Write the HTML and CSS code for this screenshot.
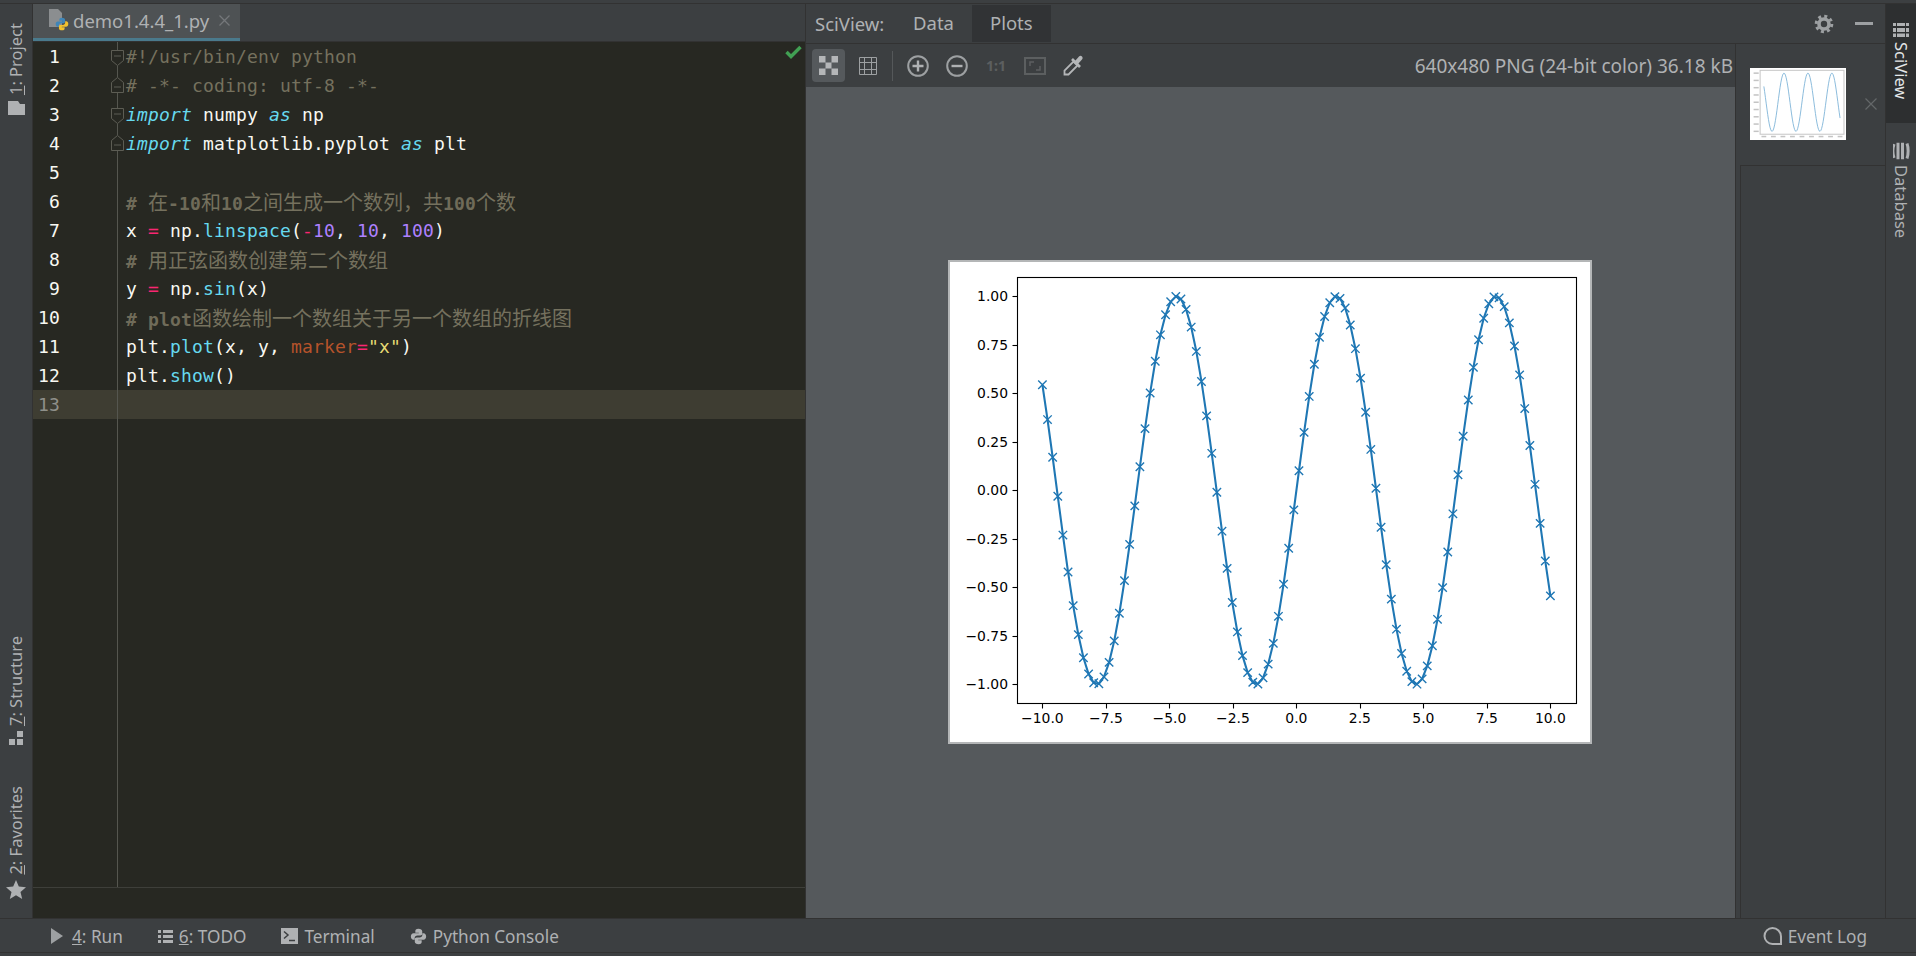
FILE: index.html
```html
<!DOCTYPE html>
<html lang="en">
<head>
<meta charset="utf-8">
<title>SciView</title>
<link rel="stylesheet" href="styles.css">
</head>
<body>
<svg class="defs" width="0" height="0" aria-hidden="true">
  <symbol id="fold-down" viewBox="0 0 14 16"><path d="M.5.5h12v10l-6 5-6-5z" fill="none" stroke="#5d5d54"/><path d="M3 6h7" stroke="#5d5d54"/></symbol>
  <symbol id="fold-up" viewBox="0 0 14 16"><path d="M.5 15.5h12v-10l-6-5-6 5z" fill="none" stroke="#5d5d54"/><path d="M3 10h7" stroke="#5d5d54"/></symbol>
  <symbol id="py" viewBox="0 0 16 16"><path id="py-half" d="M8 .8C5.6.8 5 1.8 5 3v1.4h3.3V5H3.3C1.8 5 .8 6.2.8 8s1 3.1 2.4 3.1h1.2V9.4C4.4 8 5.5 7 7 7h2.8c1 0 1.7-.7 1.7-1.6V3C11.500 1.700 10 .8 8 .8z"/></symbol>
</svg>
<div class="main">
  <aside class="stripe-left">
    <div class="vtab vtab-project"><span class="vtext-up"><u>1</u>: Project</span>
      <svg class="ico-folder" width="17" height="14" viewBox="0 0 17 14"><path d="M0 0h10l2 3h5v11H0z" fill="#afb1b3"/></svg>
    </div>
    <div class="vtab vtab-push"><span class="vtext-up"><u>7</u>: Structure</span>
      <svg width="14" height="14" viewBox="0 0 14 14"><path d="M8 0h6v6H8zM0 8h6v6H0zM8 8h6v6H8z" fill="#afb1b3"/></svg>
    </div>
    <div class="vtab vtab-fav"><span class="vtext-up"><u>2</u>: Favorites</span>
      <svg width="20" height="19" viewBox="0 0 20 19"><path d="M10 0l2.800 6.600 7.200.6-5.500 4.700 1.700 7L10 15.200 3.800 19l1.700-7L0 7.200l7.200-.6z" fill="#afb1b3"/></svg>
    </div>
  </aside>

  <section class="editor-pane">
    <div class="tabbar">
      <div class="filetab">
        <svg class="ico-pyfile" width="21" height="22" viewBox="0 0 21 22">
          <path d="M0 0h9l4 4v14H0z" fill="#8b8e90"/>
          <g transform="translate(5 8)"><use href="#py" width="16" height="14" fill="#3f86b8"/></g>
          <g transform="translate(21 22) rotate(180)"><use href="#py" width="16" height="14" fill="#f2c12e"/></g>
        </svg>
        <span class="filetab-name">demo1.4.4_1.py</span>
        <svg width="11" height="11" viewBox="0 0 11 11"><path d="M.5.5l10 10M10.500.5l-10 10" stroke="#74777a" stroke-width="1.300"/></svg>
      </div>
    </div>
    <div class="editor">
      <div class="code-area">
        <svg class="ok-mark" width="17" height="14" viewBox="0 0 17 14"><path d="M1.500 7l4.500 4.500L15.500 2" fill="none" stroke="#41a053" stroke-width="3.400"/></svg>
        <div class="row"><span class="ln">1</span><span class="foldcell fold-a"><svg width="14" height="16"><use href="#fold-down"/></svg></span><code class="c">#!/usr/bin/env python</code></div>
        <div class="row"><span class="ln">2</span><span class="foldcell fold-b"><svg width="14" height="16"><use href="#fold-up"/></svg></span><code class="c"># -*- coding: utf-8 -*-</code></div>
        <div class="row"><span class="ln">3</span><span class="foldcell fold-a"><svg width="14" height="16"><use href="#fold-down"/></svg></span><code><i class="k">import</i> numpy <i class="k">as</i> np</code></div>
        <div class="row"><span class="ln">4</span><span class="foldcell fold-b"><svg width="14" height="16"><use href="#fold-up"/></svg></span><code><i class="k">import</i> matplotlib.pyplot <i class="k">as</i> plt</code></div>
        <div class="row"><span class="ln">5</span><span class="foldcell"></span><code></code></div>
        <div class="row"><span class="ln">6</span><span class="foldcell"></span><code class="c"><strong># </strong><b class="zh">在</b><strong>-10</strong><b class="zh">和</b><strong>10</strong><b class="zh">之间生成一个数列，共</b><strong>100</strong><b class="zh">个数</b></code></div>
        <div class="row"><span class="ln">7</span><span class="foldcell"></span><code>x <b class="o">=</b> np.<b class="f">linspace</b>(<b class="o">-</b><b class="n">10</b>, <b class="n">10</b>, <b class="n">100</b>)</code></div>
        <div class="row"><span class="ln">8</span><span class="foldcell"></span><code class="c"><strong># </strong><b class="zh">用正弦函数创建第二个数组</b></code></div>
        <div class="row"><span class="ln">9</span><span class="foldcell"></span><code>y <b class="o">=</b> np.<b class="f">sin</b>(x)</code></div>
        <div class="row"><span class="ln">10</span><span class="foldcell"></span><code class="c"><strong># plot</strong><b class="zh">函数绘制一个数组关于另一个数组的折线图</b></code></div>
        <div class="row"><span class="ln">11</span><span class="foldcell"></span><code>plt.<b class="f">plot</b>(x, y, <b class="p">marker</b><b class="o">=</b><b class="s">"x"</b>)</code></div>
        <div class="row"><span class="ln">12</span><span class="foldcell"></span><code>plt.<b class="f">show</b>()</code></div>
        <div class="row row-current"><span class="ln">13</span><span class="foldcell"></span><code></code></div>
      </div>
    </div>
  </section>

  <section class="sci-pane">
    <header class="sci-head">
      <span class="sci-label">SciView:</span>
      <span class="sci-tab">Data</span>
      <span class="sci-tab sci-tab-on">Plots</span>
      <svg class="ico-gear" width="20" height="20" viewBox="-10 -10 20 20"><circle r="5" fill="none" stroke="#9da0a2" stroke-width="3.600"/><circle r="7.800" fill="none" stroke="#9da0a2" stroke-width="3" stroke-dasharray="3 3.126"/></svg>
      <span class="ico-min"></span>
    </header>
    <div class="sci-body">
      <div class="viewer">
        <div class="toolbar">
          <span class="tool tool-on"><svg width="19" height="19" viewBox="0 0 19 19"><path d="M0 0h6.500v6.500H0zM12.500 0H19v6.500h-6.500zM6.500 6.500h6v6h-6zM0 12.500h6.500V19H0zM12.500 12.500H19V19h-6.500z" fill="#b4b6b8"/></svg></span>
          <span class="tool"><svg width="18" height="18" viewBox="0 0 18 18"><path d="M.5.5h17v17H.5zM5.500.5v17M12.500.5v17M.5 5.500h17M.5 12.500h17" fill="none" stroke="#9da0a2"/></svg></span>
          <span class="tool-sep"></span>
          <span class="tool tool-r"><svg width="22" height="22" viewBox="0 0 22 22"><circle cx="11" cy="11" r="9.800" fill="none" stroke="#9da0a2" stroke-width="2"/><path d="M5.500 11h11M11 5.500v11" stroke="#afb1b3" stroke-width="2.400"/></svg></span>
          <span class="tool tool-r"><svg width="22" height="22" viewBox="0 0 22 22"><circle cx="11" cy="11" r="9.800" fill="none" stroke="#9da0a2" stroke-width="2"/><path d="M5.500 11h11" stroke="#afb1b3" stroke-width="2.400"/></svg></span>
          <span class="tool-dim">1:1</span>
          <span class="tool tool-frame"><svg width="22" height="18" viewBox="0 0 22 18"><path d="M1 1h20v16H1z" fill="none" stroke="#5c5f60" stroke-width="2"/><path d="M6 9V5h4M16 9v4h-4" fill="none" stroke="#5c5f60" stroke-width="1.500"/></svg></span>
          <span class="tool tool-drop"><svg width="21" height="21" viewBox="0 0 21 21"><path d="M1.500 19.500v-4l9-9 4 4-9 9z" fill="none" stroke="#b4b6b8" stroke-width="1.800"/><path d="M9 4l8 8" stroke="#b4b6b8" stroke-width="2.600"/><path d="M12 6l4-4.500c1-1 2.200-1 3 0s.9 2 0 3L15 9z" fill="#b4b6b8"/></svg></span>
          <span class="img-info">640x480 PNG (24-bit color) 36.18 kB</span>
        </div>
        <div class="canvas">
          <div class="plot-frame"><svg id="plot" class="plot" width="640" height="480" viewBox="0 0 640 480"></svg></div>
        </div>
      </div>
      <aside class="thumbs">
        <div class="thumb-item">
          <svg id="thumb" class="thumb" width="96" height="72" viewBox="0 0 640 480"></svg>
          <svg class="thumb-x" width="12" height="12" viewBox="0 0 12 12"><path d="M.5.5l11 11M11.500.5l-11 11" stroke="#646769" stroke-width="1.200"/></svg>
        </div>
        <div class="thumb-rest"></div>
      </aside>
    </div>
  </section>

  <aside class="stripe-right">
    <div class="rtab rtab-on">
      <svg width="16" height="14" viewBox="0 0 16 14"><path d="M0 0h3v3H0zM4 0h8v3H4zM13 0h3v3h-3zM0 5h3v4H0zM4 5h8v4H4zM13 5h3v4h-3zM0 10.500h3V14H0zM4 10.500h8V14H4zM13 10.500h3V14h-3z" fill="#afb1b3"/></svg>
      <span class="vtext-down">SciView</span>
    </div>
    <div class="rtab">
      <svg width="17" height="18" viewBox="0 0 17 18"><path d="M1 2c-1.300 4-1.300 10 0 14M5 .7v16.600M9.500.7v16.600M14 1.500c1.500 4 1.500 11 0 15" stroke="#afb1b3" stroke-width="3" fill="none"/></svg>
      <span class="vtext-down">Database</span>
    </div>
  </aside>
</div>

<footer class="status">
  <span class="st-item st-run"><svg width="12" height="16" viewBox="0 0 12 16"><path d="M0 0l12 8-12 8z" fill="#9da0a2"/></svg><span><u>4</u>: Run</span></span>
  <span class="st-item"><svg width="15" height="13" viewBox="0 0 15 13"><path d="M0 0h3v3H0zM5 0h10v3H5zM0 5h3v3H0zM5 5h10v3H5zM0 10h3v3H0zM5 10h10v3H5z" fill="#afb1b3"/></svg><span><u>6</u>: TODO</span></span>
  <span class="st-item"><svg width="17" height="16" viewBox="0 0 17 16"><path d="M0 0h17v16H0z" fill="#afb1b3"/><path d="M3 3.500L7 7l-4 3.500" fill="none" stroke="#3c3f41" stroke-width="1.500"/><path d="M8 12.500h6" stroke="#3c3f41" stroke-width="1.500"/></svg><span>Terminal</span></span>
  <span class="st-item"><svg width="17" height="17" viewBox="0 0 16 16"><use href="#py" width="16" height="16" fill="#afb1b3"/><g transform="rotate(180 8 8)"><use href="#py" width="16" height="16" fill="#afb1b3"/></g></svg><span>Python Console</span></span>
  <span class="st-item st-log"><svg width="19" height="18" viewBox="0 0 19 18"><path d="M9.500 1a8 8 0 1 0 0 16H18V9.500a8.500 8.500 0 0 0-8.500-8.500z" fill="none" stroke="#afb1b3" stroke-width="2"/></svg><span>Event Log</span></span>
</footer>
<script src="plot.js"></script>
</body>
</html>
```

FILE: styles.css
```css
* { box-sizing: border-box; }
html, body { margin: 0; height: 100%; }
body {
  width: 1916px;
  height: 956px;
  overflow: hidden;
  display: flex;
  flex-direction: column;
  padding-top: 3px;
  background: #3c3f41;
  color: #afb1b3;
  font-family: "Noto Sans", "Open Sans", sans-serif;
  font-size: 16.5px;
}
.defs { position: absolute; }
svg { display: block; flex: none; }

.main {
  flex: 1;
  min-height: 0;
  display: flex;
  border-top: 1px solid #323232;
}

/* left tool stripe */
.stripe-left {
  width: 33px;
  flex: none;
  display: flex;
  flex-direction: column;
  align-items: center;
  border-right: 1px solid #323232;
  padding: 19px 0 19px;
}
.vtab { display: flex; flex-direction: column; align-items: center; gap: 5px; }
.vtab-project { gap: 6px; }
.vtab-push { margin-top: auto; }
.vtab-fav { margin-top: 41px; }
.vtext-up { writing-mode: vertical-rl; transform: rotate(180deg); line-height: 20px; white-space: nowrap; }
.vtext-down { writing-mode: vertical-rl; line-height: 20px; white-space: nowrap; }

/* editor */
.editor-pane {
  width: 773px;
  flex: none;
  display: flex;
  flex-direction: column;
  border-right: 1px solid #323232;
}
.tabbar { height: 38px; flex: none; border-bottom: 1px solid #323232; display: flex; }
.filetab {
  width: 207px;
  display: flex;
  align-items: center;
  padding: 0 0 2px 16px;
  background: #4e5254;
  border-bottom: 3px solid #4a7a8c;
  color: #afb1b3;
  font-size: 18.5px;
}
.ico-pyfile { margin-right: 3px; }
.filetab-name { margin-right: 10px; }
.editor { flex: 1; background: #272822; }
.code-area {
  position: relative;
  height: 846px;
  border-bottom: 1px solid #3e3f3a;
}
.code-area::before {
  content: "";
  position: absolute;
  left: 84px;
  top: 0;
  bottom: 0;
  width: 1px;
  background: #55564f;
  z-index: 1;
}
.ok-mark { position: absolute; right: 3px; top: 3px; }
.row {
  display: flex;
  height: 29px;
  line-height: 29px;
  font-family: "DejaVu Sans Mono", monospace;
  font-size: 18px;
  letter-spacing: .16px;
  color: #f8f8f2;
  white-space: pre;
}
.row-current { background: #3e3d32; }
.row-current .ln { color: #8f908a; }
.ln { width: 27px; text-align: right; flex: none; }
.foldcell { width: 14px; flex: none; margin: 0 1px 0 51px; position: relative; z-index: 2; }
.foldcell svg { background: #272822; }
.fold-a { padding-top: 8px; }
.fold-b { padding-top: 6px; }
code { font: inherit; }
.c { color: #75715e; }
.row b { font-weight: normal; }
.row strong { font-weight: bold; color: #6f6b59; }
.k { color: #66d9ef; font-style: italic; }
.o { color: #f92672; }
.f { color: #66d9ef; }
.n { color: #ae81ff; }
.s { color: #e6db74; }
.p { color: #b5532b; }
.zh { font-family: "Noto Sans CJK SC", sans-serif; font-size: 20px; letter-spacing: 0; }

/* SciView */
.sci-pane { flex: 1; min-width: 0; display: flex; flex-direction: column; }
.sci-head {
  height: 40px;
  flex: none;
  display: flex;
  align-items: center;
  border-bottom: 1px solid #323232;
  padding-left: 9px;
  font-size: 18.5px;
}
.sci-label { width: 80px; }
.sci-tab { padding: 0 18px; height: 37px; line-height: 35px; }
.sci-tab-on { background: #313335; }
.ico-gear { margin-left: auto; margin-right: 21px; }
.ico-min { width: 18px; height: 3px; background: #9da0a2; margin-right: 12px; }
.sci-body { flex: 1; min-height: 0; display: flex; }
.viewer { width: 929px; flex: none; display: flex; flex-direction: column; }
.toolbar { height: 43px; flex: none; display: flex; align-items: center; padding-left: 6px; }
.tool { width: 33px; height: 33px; display: flex; align-items: center; justify-content: center; border-radius: 4px; }
.tool + .tool { margin-left: 6px; }
.tool-on { background: #55595c; }
.tool-sep { width: 1px; height: 30px; background: #55585a; margin: 0 8px; }
.tool.tool-r { margin-left: 6px; }
.tool-sep + .tool.tool-r { margin-left: 0; }
.tool-dim { width: 17px; margin-left: 13px; font-weight: 700; font-size: 14px; color: #5c5f60; white-space: nowrap; }
.tool.tool-frame { margin-left: 15px; }
.tool.tool-drop { margin-left: 6px; }
.img-info { margin-left: auto; margin-right: 2px; font-size: 19px; white-space: nowrap; }
.canvas { flex: 1; background: #55595c; display: flex; align-items: center; justify-content: center; padding: 0 1px 1px 0; }
.plot-frame { border: 2px solid #b4b6b7; }
.plot { background: #fff; }
.plot text { font-family: "DejaVu Sans", sans-serif; font-size: 13.900px; fill: #000; }
.thumbs { flex: 1; display: flex; flex-direction: column; border-left: 1px solid #323232; }
.thumb-item {
  height: 122px;
  flex: none;
  margin-left: 4px;
  padding: 24px 0 0 10px;
  display: flex;
  border-bottom: 1px solid #323232;
}
.thumb { background: #fff; }
.thumb-x { margin: 30px 0 0 19px; }
.thumb-rest { flex: 1; margin-left: 4px; border-left: 1px solid #323232; }

.stripe-right { width: 31px; flex: none; border-left: 1px solid #323232; display: flex; flex-direction: column; }
.rtab { display: flex; flex-direction: column; align-items: center; gap: 5px; padding-top: 19px; }
.rtab-on { height: 119px; background: #2d2f30; color: #e4e6e8; }

/* status */
.status {
  height: 38px;
  flex: none;
  display: flex;
  align-items: center;
  gap: 35px;
  padding: 0 49px 3px 51px;
  border-top: 1px solid #323232;
  box-shadow: inset 0 -3px 0 #3c3f41, inset 0 -4px 0 #323232;
  font-size: 17.200px;
}
.st-item { display: flex; align-items: center; gap: 6px; }
.st-run { gap: 9px; }
.st-log { margin-left: auto; }
```

FILE: plot.js
```js
(function () {
  var NS = "http://www.w3.org/2000/svg";
  var BLUE = "#1f77b4";

  function X(v) { return 92.4 + (v + 10) * 25.4; }
  function Y(v) { return 228.3 - v * 194; }
  function el(parent, name, attrs, text) {
    var n = document.createElementNS(NS, name);
    for (var k in attrs) n.setAttribute(k, attrs[k]);
    if (text) n.textContent = text;
    parent.appendChild(n);
    return n;
  }

  var pts = [];
  for (var i = 0; i < 100; i++) {
    var x = -10 + (20 * i) / 99;
    pts.push([X(x), Y(Math.sin(x))]);
  }
  var line = pts.map(function (p) { return p[0].toFixed(2) + "," + p[1].toFixed(2); }).join(" ");

  /* main plot */
  var svg = document.getElementById("plot");
  el(svg, "polyline", { points: line, fill: "none", stroke: BLUE, "stroke-width": 2.08 });
  var d = pts.map(function (p) {
    var a = p[0], b = p[1], r = 4.2;
    return "M" + (a - r) + " " + (b - r) + "L" + (a + r) + " " + (b + r) +
           "M" + (a + r) + " " + (b - r) + "L" + (a - r) + " " + (b + r);
  }).join("");
  el(svg, "path", { d: d, fill: "none", stroke: BLUE, "stroke-width": 1.39 });
  el(svg, "rect", { x: 67.5, y: 15.5, width: 559, height: 426, fill: "none", stroke: "#000", "stroke-width": 1.1 });

  function label(v, digits) {
    return (v < 0 ? "\u2212" : "") + Math.abs(v).toFixed(digits);
  }
  for (var xt = -10; xt <= 10; xt += 2.5) {
    var px = Math.round(X(xt)) + 0.5;
    el(svg, "path", { d: "M" + px + " 441.5v5", stroke: "#000", "stroke-width": 1.1 });
    el(svg, "text", { x: X(xt), y: 461, "text-anchor": "middle" }, label(xt, 1));
  }
  for (var yt = -1; yt <= 1; yt += 0.25) {
    var py = Math.round(Y(yt)) + 0.5;
    el(svg, "path", { d: "M67.5 " + py + "h-5", stroke: "#000", "stroke-width": 1.1 });
    el(svg, "text", { x: 58, y: Y(yt) + 5, "text-anchor": "end" }, label(yt, 2));
  }

  /* thumbnail of the same picture */
  var th = document.getElementById("thumb");
  el(th, "rect", { x: 67.5, y: 15.5, width: 559, height: 426, fill: "none", stroke: "#c8c8c8", "stroke-width": 7 });
  el(th, "polyline", { points: line, fill: "none", stroke: "#7fb4d8", "stroke-width": 6 });
  for (var a = -10; a <= 10; a += 2.5) {
    el(th, "rect", { x: X(a) - 16, y: 452, width: 32, height: 10, fill: "#c4c4c4" });
  }
  for (var b = -1; b <= 1; b += 0.25) {
    el(th, "rect", { x: 24, y: Y(b) - 5, width: 34, height: 10, fill: "#c4c4c4" });
  }
})();
```
